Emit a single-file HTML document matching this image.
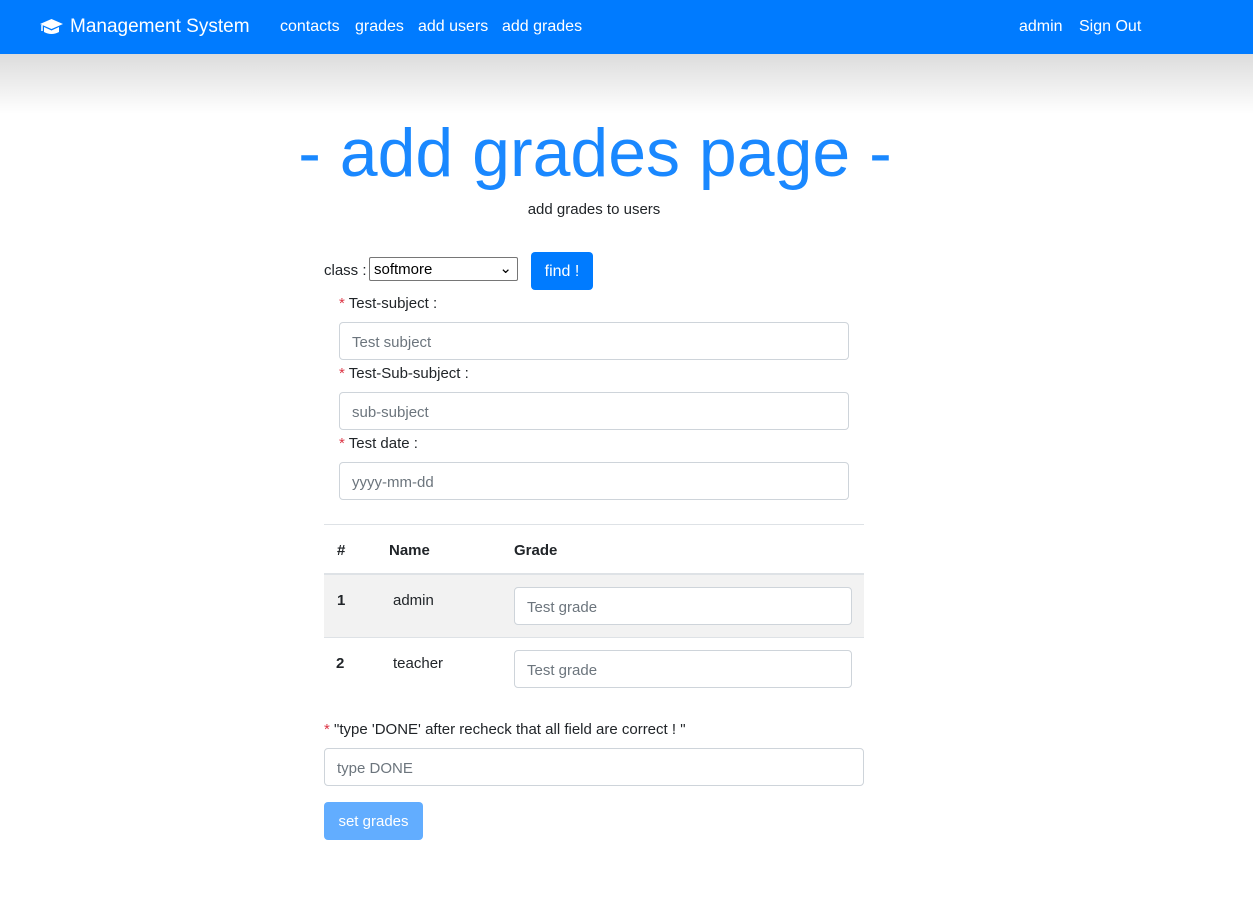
<!DOCTYPE html>
<html><head><style>
body{margin:0;width:1253px;height:924px;font-family:"Liberation Sans",sans-serif;color:#212529;background:#fff;position:relative;overflow:hidden;font-size:15px}
.nav{position:absolute;left:0;top:0;width:1253px;height:54px;background:#007bff;color:#fff}
.nav span{position:absolute;top:18px;font-size:16px}
.grad{position:absolute;top:54px;left:0;width:1253px;height:60px;background:linear-gradient(#dcdcdc,#fff)}
.a{position:absolute}
.inp{position:absolute;border:1px solid #ced4da;border-radius:4px;box-sizing:border-box;height:38px;color:#6c757d;font-size:15px;padding:11px 12px 0;background:#fff}
.star{color:#dc3545}
b{font-weight:bold}
</style></head><body>
<div class="nav">
<svg class="a" style="left:39px;top:18px" width="25" height="18" viewBox="0 0 25 18"><path d="M12.5 1 L24 6 L12.5 11 L1 6Z" fill="#fff"/><path d="M5 9 V14 Q12.5 18 20 14 V9 L12.5 12.5Z" fill="#fff"/><path d="M3 7 V13" stroke="#fff" stroke-width="1.5"/></svg>
<span style="left:70px;font-size:19px;top:16px">Management System</span>
<span style="left:280px">contacts</span><span style="left:355px">grades</span><span style="left:418px">add users</span><span style="left:502px">add grades</span>
<span style="left:1019px">admin</span><span style="left:1079px">Sign Out</span>
</div>
<div class="grad"></div>
<div class="a" style="left:0;width:1190px;top:114px;text-align:center;font-size:68px;color:#1a88ff;letter-spacing:0px">- add grades page -</div>
<div class="a" style="left:0;width:1188px;top:201px;text-align:center">add grades to users</div>
<div class="a" style="left:324px;top:262px">class :</div>
<div class="a" style="left:369px;top:257px;width:149px;height:24px;border:1px solid #767676;border-radius:2px;box-sizing:border-box;padding:3px 4px;font-size:15px;color:#000">softmore<span style="position:absolute;right:5px;top:1px">⌄</span></div>
<div class="a" style="left:531px;top:252px;width:62px;height:38px;background:#007bff;border-radius:4px;color:#fff;text-align:center;line-height:40px;font-size:16px">find !</div>
<div class="a" style="left:339px;top:295px"><span class="star">*</span> Test-subject :</div>
<div class="inp" style="left:339px;top:322px;width:510px">Test subject</div>
<div class="a" style="left:339px;top:365px"><span class="star">*</span> Test-Sub-subject :</div>
<div class="inp" style="left:339px;top:392px;width:510px">sub-subject</div>
<div class="a" style="left:339px;top:435px"><span class="star">*</span> Test date :</div>
<div class="inp" style="left:339px;top:462px;width:510px">yyyy-mm-dd</div>
<div class="a" style="left:324px;top:524px;width:540px;height:1px;background:#dee2e6"></div>
<div class="a" style="left:337px;top:542px"><b>#</b></div>
<div class="a" style="left:389px;top:542px"><b>Name</b></div>
<div class="a" style="left:514px;top:542px"><b>Grade</b></div>
<div class="a" style="left:324px;top:573px;width:540px;height:2px;background:#dee2e6"></div>
<div class="a" style="left:324px;top:575px;width:540px;height:62px;background:#f2f2f2;border-bottom:1px solid #dee2e6"></div>
<div class="a" style="left:337px;top:592px"><b>1</b></div>
<div class="a" style="left:393px;top:592px">admin</div>
<div class="inp" style="left:514px;top:587px;width:338px">Test grade</div>
<div class="a" style="left:336px;top:655px"><b>2</b></div>
<div class="a" style="left:393px;top:655px">teacher</div>
<div class="inp" style="left:514px;top:650px;width:338px">Test grade</div>
<div class="a" style="left:324px;top:721px"><span class="star">*</span> "type 'DONE' after recheck that all field are correct ! "</div>
<div class="inp" style="left:324px;top:748px;width:540px">type DONE</div>
<div class="a" style="left:324px;top:802px;width:99px;height:38px;background:#62adff;border-radius:4px;color:#fff;text-align:center;line-height:40px">set grades</div>
</body></html>
